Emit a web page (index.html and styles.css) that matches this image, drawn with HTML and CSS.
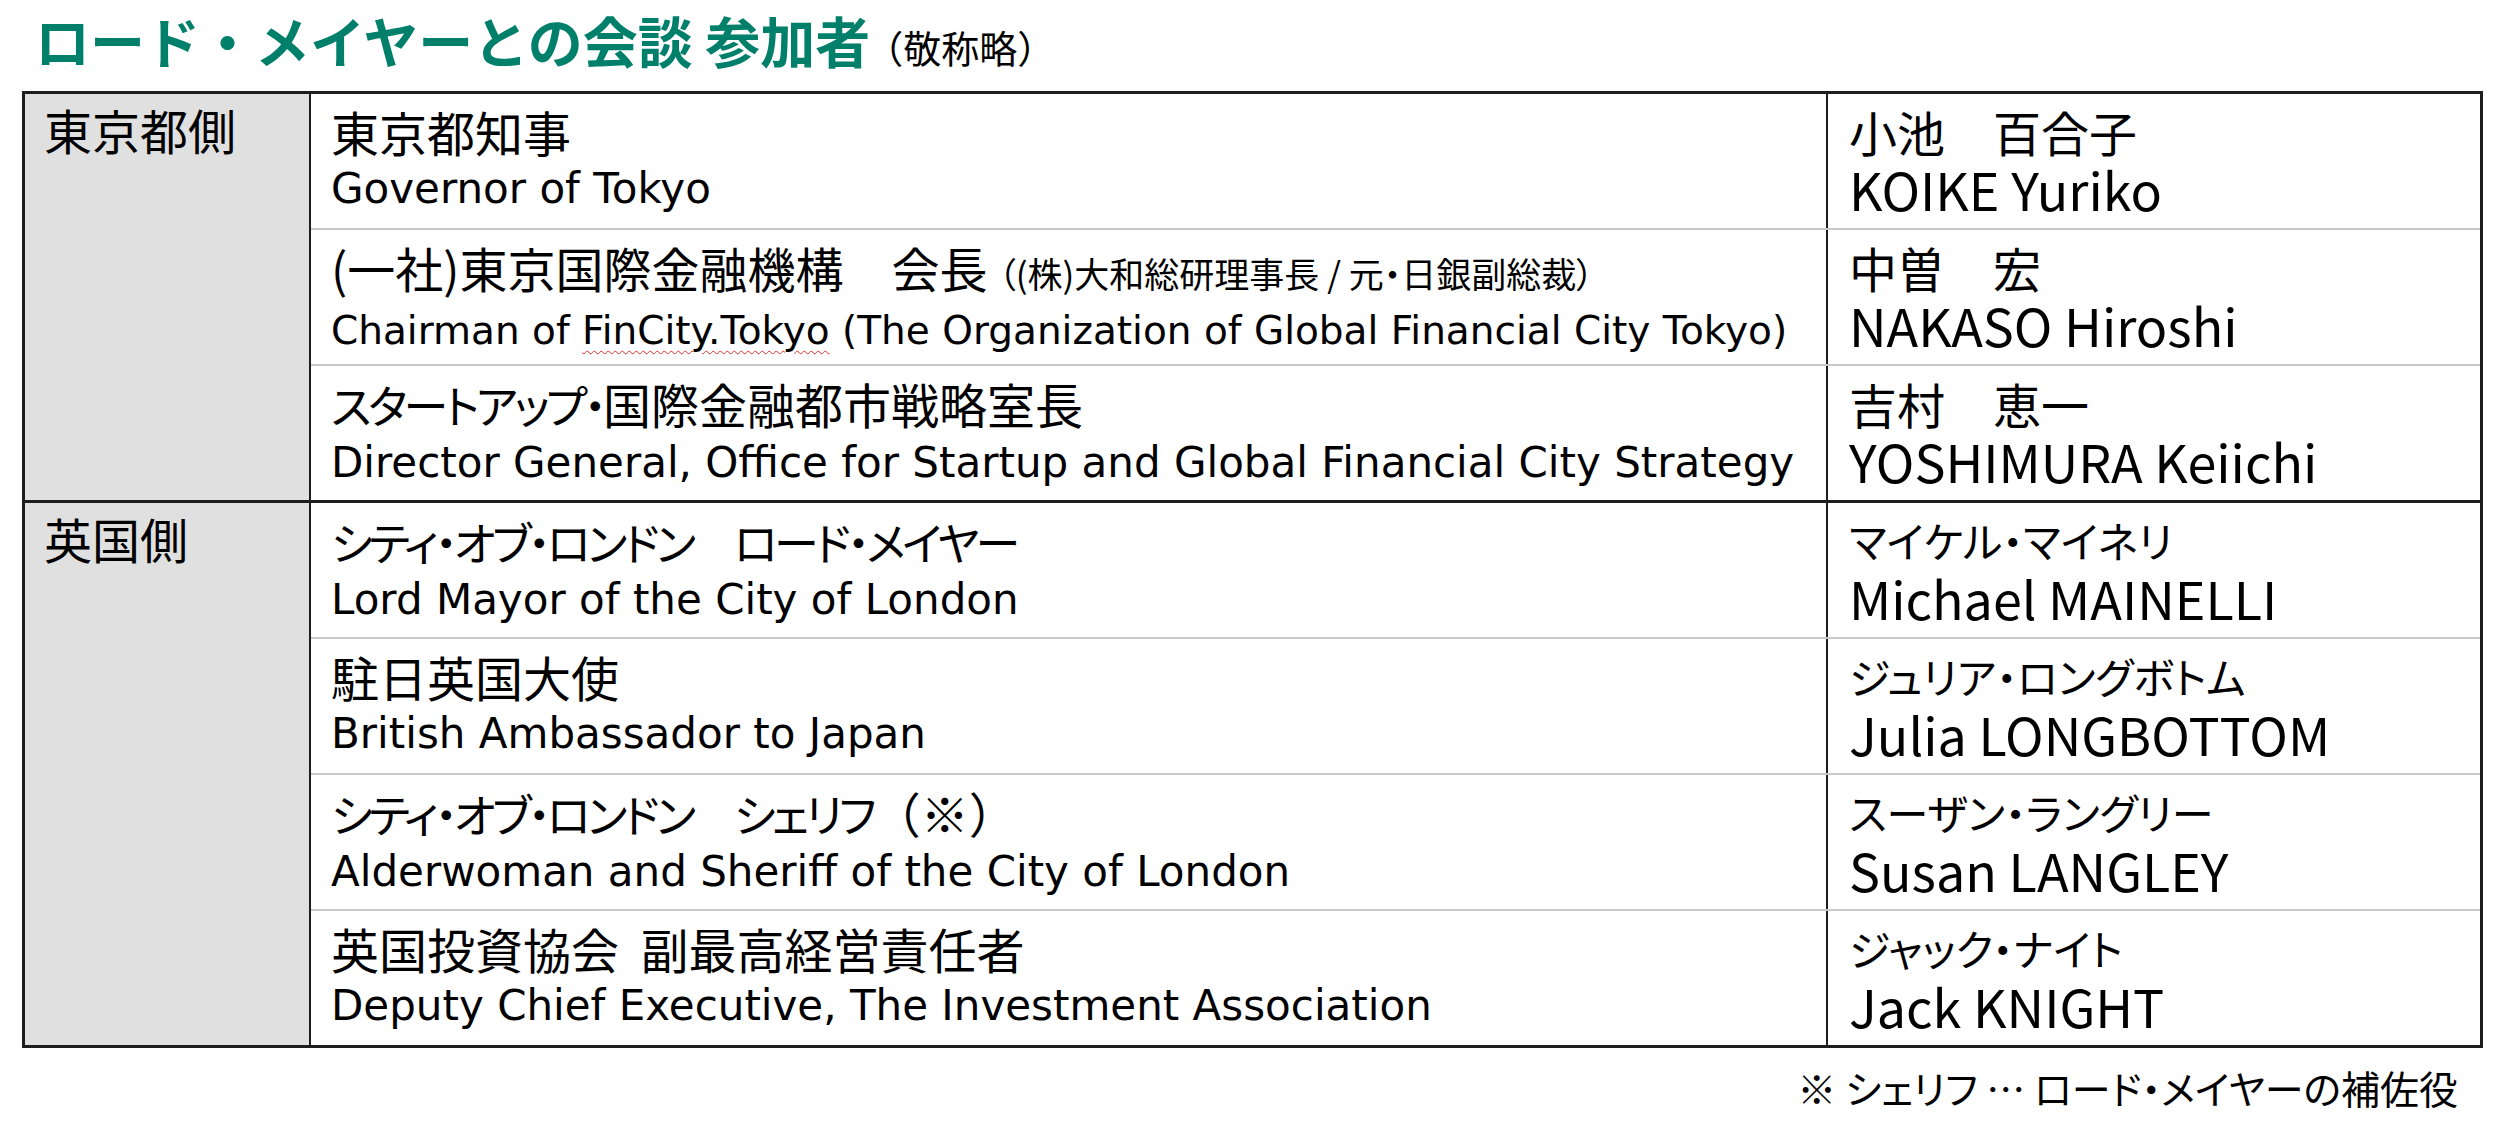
FILE: index.html
```html
<!DOCTYPE html>
<html lang="ja">
<head>
    <meta charset="UTF-8">
    <meta name="viewport" content="width=device-width, initial-scale=1.0">
    <title>ロード・メイヤーとの会談 参加者</title>
    <link rel="stylesheet" href="styles.css">
</head>
<body>

<div class="page">
    <h1 class="title">ロード・メイヤーとの会談 参加者<span class="note">（敬称略）</span></h1>

    <div class="roster">
        <div class="group">
            <div class="side">東京都側</div>
            <div class="entries">
                <div class="entry">
                    <div class="role">
                        <div class="jp">東京都知事</div>
                        <div class="en">Governor of Tokyo</div>
                    </div>
                    <div class="name">
                        <div class="jp">小池　百合子</div>
                        <div class="en">KOIKE Yuriko</div>
                    </div>
                </div>
                <div class="entry">
                    <div class="role">
                        <div class="jp">(一社)東京国際金融機構　会長 <span class="small">（(株)大和総研理事長 / 元・日銀副総裁）</span></div>
                        <div class="en long">Chairman of <span class="typo">FinCity.Tokyo</span> (The Organization of Global Financial City Tokyo)</div>
                    </div>
                    <div class="name">
                        <div class="jp">中曽　宏</div>
                        <div class="en">NAKASO Hiroshi</div>
                    </div>
                </div>
                <div class="entry">
                    <div class="role">
                        <div class="jp"><span class="kn">スタートアップ・</span>国際金融都市戦略室長</div>
                        <div class="en">Director General, Office for Startup and Global Financial City Strategy</div>
                    </div>
                    <div class="name">
                        <div class="jp">吉村　恵一</div>
                        <div class="en">YOSHIMURA Keiichi</div>
                    </div>
                </div>
            </div>
        </div>

        <div class="group">
            <div class="side">英国側</div>
            <div class="entries">
                <div class="entry">
                    <div class="role">
                        <div class="jp"><span class="kn">シティ・オブ・ロンドン　ロード・メイヤー</span></div>
                        <div class="en">Lord Mayor of the City of London</div>
                    </div>
                    <div class="name">
                        <div class="jp kana">マイケル・マイネリ</div>
                        <div class="en">Michael MAINELLI</div>
                    </div>
                </div>
                <div class="entry">
                    <div class="role">
                        <div class="jp">駐日英国大使</div>
                        <div class="en">British Ambassador to Japan</div>
                    </div>
                    <div class="name">
                        <div class="jp kana">ジュリア・ロングボトム</div>
                        <div class="en">Julia LONGBOTTOM</div>
                    </div>
                </div>
                <div class="entry">
                    <div class="role">
                        <div class="jp"><span class="kn">シティ・オブ・ロンドン　シェリフ</span><span class="full">（※）</span></div>
                        <div class="en">Alderwoman and Sheriff of the City of London</div>
                    </div>
                    <div class="name">
                        <div class="jp kana">スーザン・ラングリー</div>
                        <div class="en">Susan LANGLEY</div>
                    </div>
                </div>
                <div class="entry">
                    <div class="role">
                        <div class="jp">英国投資協会&nbsp;&nbsp;副最高経営責任者</div>
                        <div class="en">Deputy Chief Executive, The Investment Association</div>
                    </div>
                    <div class="name">
                        <div class="jp kana">ジャック・ナイト</div>
                        <div class="en">Jack KNIGHT</div>
                    </div>
                </div>
            </div>
        </div>
    </div>

    <p class="footnote">※ シェリフ … ロード・メイヤーの補佐役</p>
</div>

</body>
</html>
```

FILE: styles.css
```css
body {
    margin: 0;
    background-color: #fff;
    color: #000;
    font-family: "Noto Sans CJK JP", sans-serif;
}

.page {
    padding: 12px 24px 0 22px;
    width: 2461px;
}

.title {
    margin: 0 0 24px 13px;
    font-size: 55px;
    line-height: 55px;
    font-weight: bold;
    color: #007f6b;
}

.title .note {
    margin-left: -5px;
    font-size: 38px;
    line-height: 1;
    font-weight: normal;
    color: #000;
}

.roster {
    border: 3px solid #1e1e1e;
}

.group {
    display: grid;
    grid-template-columns: 286px 1fr;
}

.group + .group {
    border-top: 3px solid #1e1e1e;
}

.side {
    background-color: #e0e0e0;
    border-right: 2px solid #1e1e1e;
    padding: 7px 0 0 19px;
    font-size: 48px;
    line-height: 56px;
    font-feature-settings: "palt";
}

.entry {
    display: grid;
    grid-template-columns: 1517px 1fr;
    height: 134px;
}

.entry + .entry {
    border-top: 2px solid #c8c8c8;
}

.role {
    border-right: 2px solid #1e1e1e;
    padding: 9px 0 0 20px;
}

.name {
    padding: 9px 0 0 21px;
}

.jp {
    font-size: 48px;
    line-height: 56px;
    white-space: nowrap;
    font-feature-settings: "palt";
}

.jp .small {
    font-size: 35px;
}

/* katakana runs are narrower than the kanji in the original */
.jp .kn {
    font-size: 45px;
    letter-spacing: -3.5px;
}

.jp .full {
    font-feature-settings: normal;
}

.en {
    margin-top: 2px;
}

.role .en {
    font-family: "DejaVu Sans", "Noto Sans CJK JP", sans-serif;
    font-size: 42px;
    line-height: 56px;
    white-space: nowrap;
}

.role .en.long {
    font-size: 39px;
}

.name .en {
    font-family: "Noto Sans CJK JP", sans-serif;
    font-size: 52px;
    line-height: 56px;
    white-space: nowrap;
}

.name .kana {
    font-size: 42px;
}

.typo {
    text-decoration: underline wavy #e03030;
    text-decoration-thickness: 1px;
    text-underline-offset: 6px;
}

.footnote {
    margin: 11px 0 0;
    padding-right: 25px;
    text-align: right;
    font-size: 39px;
    line-height: 56px;
    font-feature-settings: "palt";
}
```
